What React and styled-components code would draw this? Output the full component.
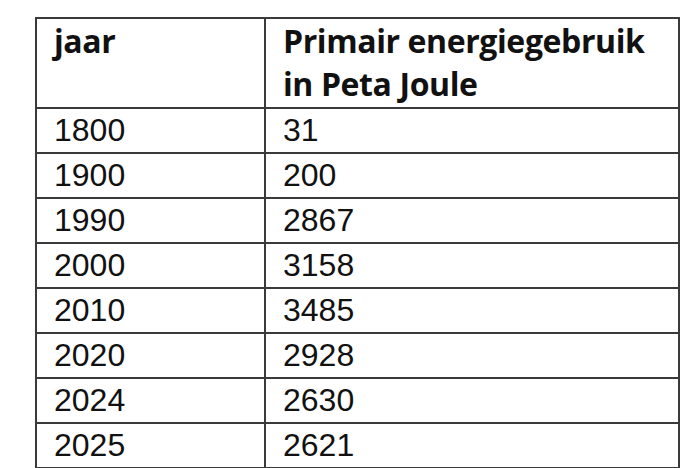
import React from 'react'
import styled, { createGlobalStyle } from 'styled-components'

const GlobalStyle = createGlobalStyle`
  html, body {
    margin: 0;
    padding: 0;
    background: #ffffff;
    overflow: hidden;
  }
  body {
    width: 700px;
    height: 468px;
  }
`

const Page = styled.div`
  padding: 17px 0 0 35px;
`

const Table = styled.table`
  border-collapse: collapse;
  table-layout: fixed;
  width: 643px;
  color: #111111;
`

const Col = styled.col`
  width: ${props => props.width}px;
`

const HeadCell = styled.th`
  border: 2px solid #3a3a3a;
  padding: 0 10px 2px 17px;
  text-align: left;
  vertical-align: top;
  font-family: "Open Sans", "Liberation Sans", sans-serif;
  font-weight: 700;
  font-size: 32px;
  line-height: 43px;
  letter-spacing: -0.4px;
`

const Cell = styled.td`
  border: 2px solid #3a3a3a;
  padding: 0 10px 0 17px;
  height: 43px;
  font-family: "Liberation Sans", Arial, sans-serif;
  font-size: 32px;
  line-height: 43px;
`

const rows = [
  ['1800', '31'],
  ['1900', '200'],
  ['1990', '2867'],
  ['2000', '3158'],
  ['2010', '3485'],
  ['2020', '2928'],
  ['2024', '2630'],
  ['2025', '2621']
]

export default function App () {
  return (
    <Page>
      <GlobalStyle />
      <Table>
        <colgroup>
          <Col width={229} />
          <Col width={414} />
        </colgroup>
        <thead>
          <tr>
            <HeadCell>jaar</HeadCell>
            <HeadCell>Primair energiegebruik in Peta Joule</HeadCell>
          </tr>
        </thead>
        <tbody>
          {rows.map(([year, value]) => (
            <tr key={year}>
              <Cell>{year}</Cell>
              <Cell>{value}</Cell>
            </tr>
          ))}
        </tbody>
      </Table>
    </Page>
  )
}
